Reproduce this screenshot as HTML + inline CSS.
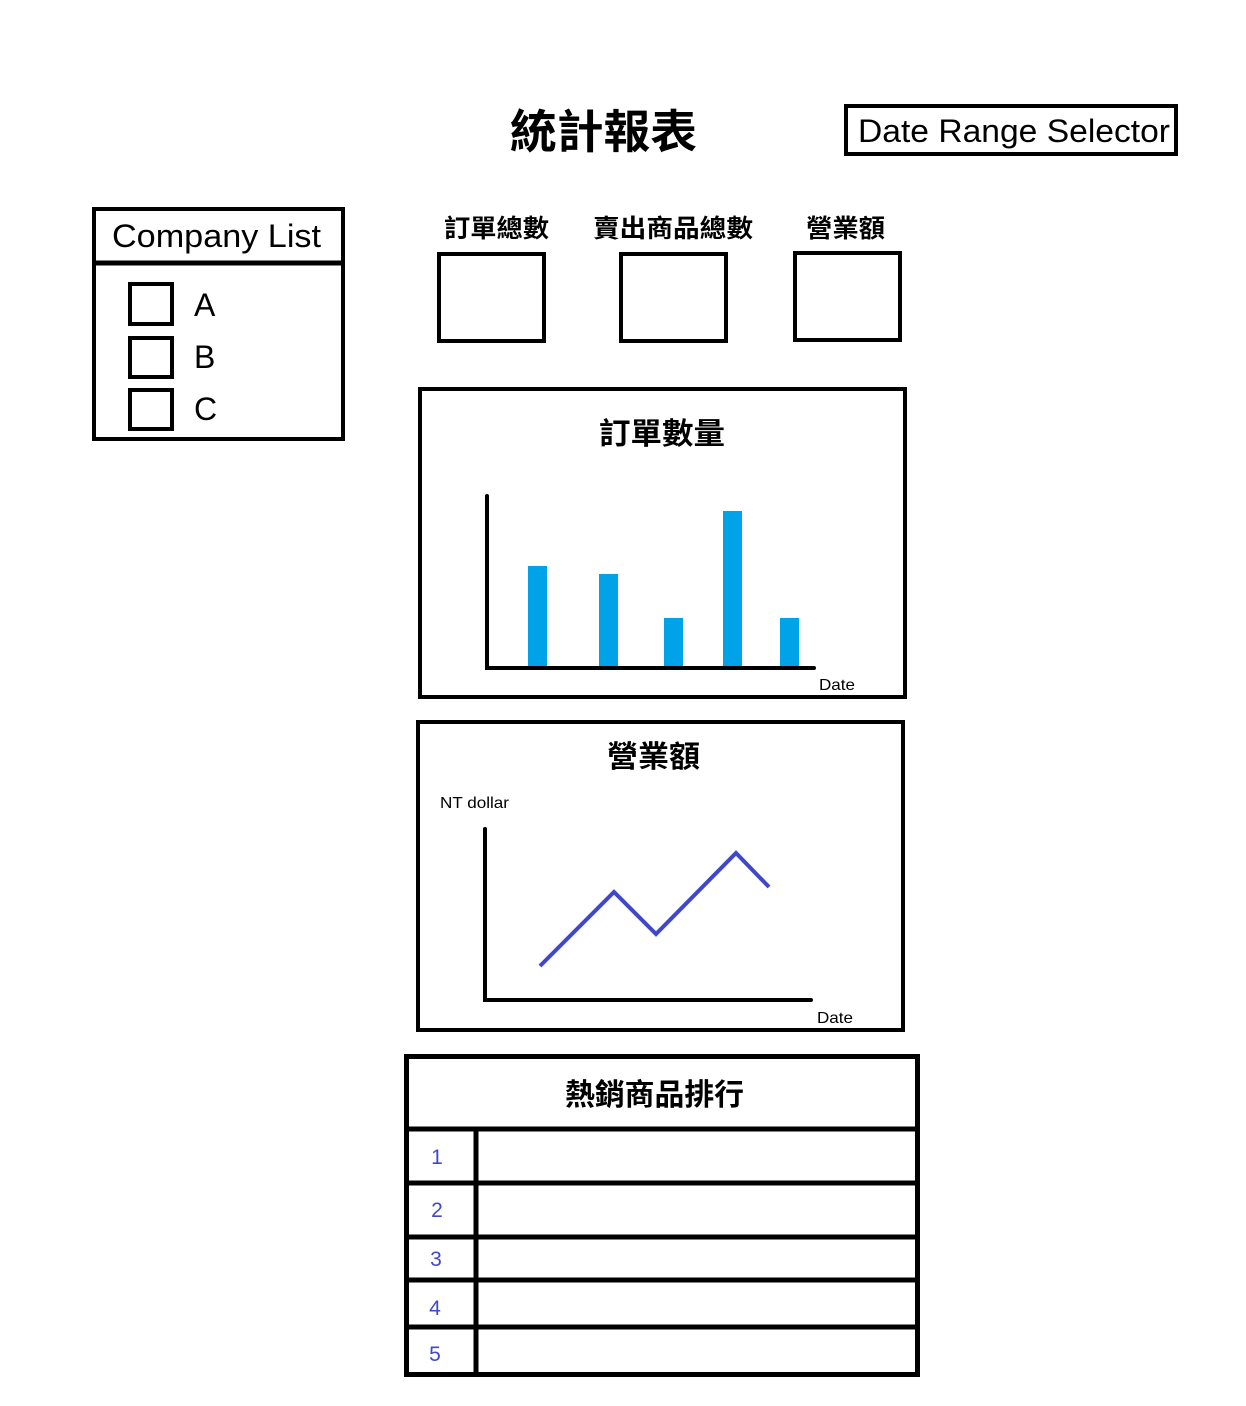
<!DOCTYPE html>
<html><head><meta charset="utf-8"><style>
html,body{margin:0;padding:0;background:#fff;width:1246px;height:1406px;overflow:hidden}
svg{display:block}
text{font-family:"Liberation Sans","Noto Sans CJK TC",sans-serif}
</style></head><body>
<svg width="1246" height="1406" viewBox="0 0 1246 1406" xmlns="http://www.w3.org/2000/svg">
<g fill="none" stroke="#000" stroke-width="4">
<rect x="846" y="106" width="330" height="48"/>
<rect x="94" y="209" width="249" height="230"/>
<line x1="94" y1="263" x2="343" y2="263" stroke-width="5"/>
<rect x="130" y="284" width="42" height="40"/>
<rect x="130" y="338" width="42" height="39"/>
<rect x="130" y="390" width="42" height="39"/>
<rect x="439" y="254" width="105" height="87"/>
<rect x="621" y="254" width="105" height="87"/>
<rect x="795" y="253" width="105" height="87"/>
<rect x="420" y="389" width="485" height="308"/>
<rect x="418" y="722" width="485" height="308"/>
<rect x="406.5" y="1056.5" width="511" height="318" stroke-width="5"/>
<g stroke-width="5">
<line x1="406" y1="1129" x2="918" y2="1129"/>
<line x1="406" y1="1183" x2="918" y2="1183"/>
<line x1="406" y1="1237" x2="918" y2="1237"/>
<line x1="406" y1="1280" x2="918" y2="1280"/>
<line x1="406" y1="1327" x2="918" y2="1327"/>
<line x1="476" y1="1129" x2="476" y2="1375"/>
</g>
<polyline points="487,496 487,668 814,668" stroke-linecap="round"/>
<polyline points="485,829 485,1000 811,1000" stroke-linecap="round"/>
<polyline points="540,966 614,892 656,934 736,853 769,887" stroke="#3f48cc" stroke-width="4"/>
</g>
<g fill="#00a2e8">
<rect x="528" y="566" width="19" height="100"/>
<rect x="599" y="574" width="19" height="92"/>
<rect x="664" y="618" width="19" height="48"/>
<rect x="723" y="511" width="19" height="155"/>
<rect x="780" y="618" width="19" height="48"/>
</g>
<g fill="#000" lengthAdjust="spacingAndGlyphs">
<text x="510" y="148" font-size="46" font-weight="bold" textLength="187" lengthAdjust="spacingAndGlyphs">統計報表</text>
<text x="858" y="142" font-size="32" textLength="312" lengthAdjust="spacingAndGlyphs">Date Range Selector</text>
<text x="112" y="247" font-size="32" textLength="209" lengthAdjust="spacingAndGlyphs">Company List</text>
<text x="194" y="316" font-size="32">A</text>
<text x="194" y="368" font-size="32">B</text>
<text x="194" y="420" font-size="32">C</text>
<text x="444" y="237" font-size="25" font-weight="bold" textLength="105" lengthAdjust="spacingAndGlyphs">訂單總數</text>
<text x="593" y="237" font-size="25" font-weight="bold" textLength="160" lengthAdjust="spacingAndGlyphs">賣出商品總數</text>
<text x="806" y="237" font-size="25" font-weight="bold" textLength="79" lengthAdjust="spacingAndGlyphs">營業額</text>
<text x="599" y="444" font-size="30" font-weight="bold" textLength="126" lengthAdjust="spacingAndGlyphs">訂單數量</text>
<text x="607" y="767" font-size="30" font-weight="bold" textLength="93" lengthAdjust="spacingAndGlyphs">營業額</text>
<text x="565" y="1105" font-size="30" font-weight="bold" textLength="179" lengthAdjust="spacingAndGlyphs">熱銷商品排行</text>
<text x="819" y="690" font-size="16" textLength="36" lengthAdjust="spacingAndGlyphs">Date</text>
<text x="817" y="1023" font-size="16" textLength="36" lengthAdjust="spacingAndGlyphs">Date</text>
<text x="440" y="808" font-size="16" textLength="69" lengthAdjust="spacingAndGlyphs">NT dollar</text>
</g>
<g fill="#3f48cc" font-size="21" text-anchor="middle">
<text x="437" y="1164">1</text>
<text x="437" y="1217">2</text>
<text x="436" y="1266">3</text>
<text x="435" y="1315">4</text>
<text x="435" y="1361">5</text>
</g>
</svg>
</body></html>
